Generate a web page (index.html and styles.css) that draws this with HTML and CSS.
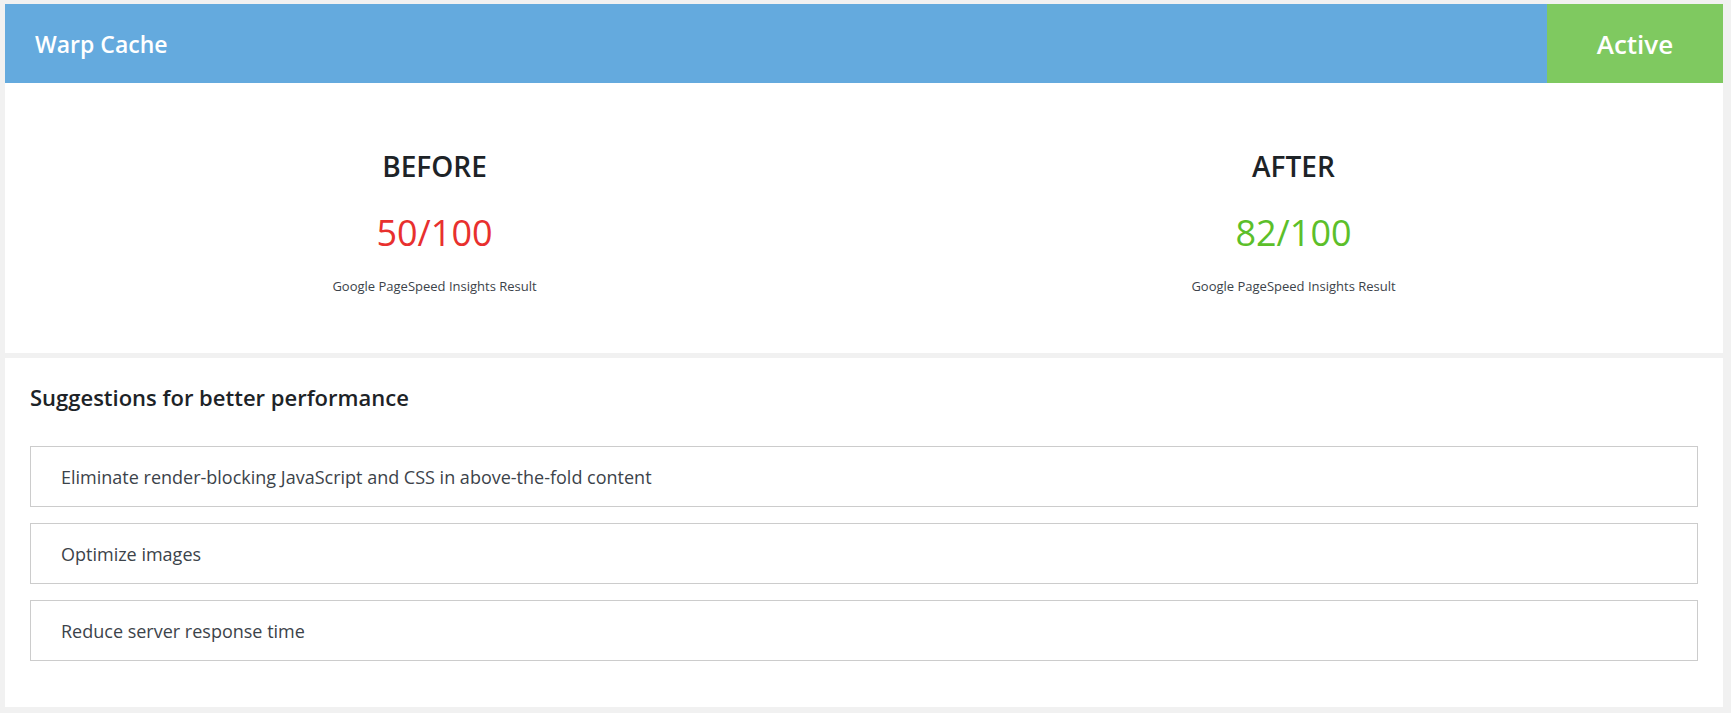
FILE: index.html
```html
<!DOCTYPE html>
<html lang="en">
<head>
<meta charset="utf-8">
<title>Warp Cache</title>
<link rel="stylesheet" href="styles.css">
</head>
<body>
<div class="page">
  <header class="header">
    <div class="header-title">Warp Cache</div>
    <div class="header-status">Active</div>
  </header>
  <section class="card scores">
    <div class="score">
      <h2 class="score-label">BEFORE</h2>
      <div class="score-value score-value--bad">50/100</div>
      <div class="score-note">Google PageSpeed Insights Result</div>
    </div>
    <div class="score">
      <h2 class="score-label">AFTER</h2>
      <div class="score-value score-value--good">82/100</div>
      <div class="score-note">Google PageSpeed Insights Result</div>
    </div>
  </section>
  <section class="card suggestions">
    <h3 class="suggestions-title">Suggestions for better performance</h3>
    <ul class="suggestion-list">
      <li class="suggestion">Eliminate render-blocking JavaScript and CSS in above-the-fold content</li>
      <li class="suggestion">Optimize images</li>
      <li class="suggestion">Reduce server response time</li>
    </ul>
  </section>
</div>
</body>
</html>
```
FILE: styles.css
```css
* { box-sizing: border-box; }
html, body { margin: 0; padding: 0; }
body {
  background: #f1f1f1;
  font-family: "Open Sans", "Liberation Sans", sans-serif;
  color: #1d2327;
}
.page {
  padding: 4px 8px 6px 5px;
}
.header {
  display: flex;
  height: 79px;
  background: #64aade;
  color: #fff;
}
.header-title {
  flex: 1;
  display: flex;
  align-items: center;
  padding-left: 30px;
  font-size: 23px;
  font-weight: 600;
}
.header-status {
  width: 176px;
  display: flex;
  align-items: center;
  justify-content: center;
  background: #7fc960;
  font-size: 26px;
  font-weight: 600;
}
.card {
  background: #fff;
}
.scores {
  display: grid;
  grid-template-columns: 1fr 1fr;
  height: 270px;
  margin-bottom: 5px;
}
.score {
  text-align: center;
  padding-top: 66px;
}
.score-label {
  margin: 0;
  font-size: 28px;
  line-height: 34px;
  font-weight: 600;
  color: #1d2327;
}
.score-value {
  margin-top: 28px;
  font-size: 36px;
  line-height: 44px;
  font-weight: 400;
}
.score-value--bad { color: #e8302e; }
.score-value--good { color: #5cbf2a; }
.score-note {
  margin-top: 23px;
  font-size: 13px;
  line-height: 17px;
  color: #3c434a;
}
.suggestions {
  padding: 24px 25px 46px;
}
.suggestions-title {
  margin: 0 0 34px;
  font-size: 22px;
  line-height: 30px;
  font-weight: 600;
  color: #1d2327;
}
.suggestion-list {
  list-style: none;
  margin: 0;
  padding: 0;
  display: flex;
  flex-direction: column;
  gap: 16px;
}
.suggestion {
  height: 61px;
  display: flex;
  align-items: center;
  padding-left: 30px;
  border: 1px solid #ccc;
  font-size: 18px;
  color: #3c434a;
}
```
